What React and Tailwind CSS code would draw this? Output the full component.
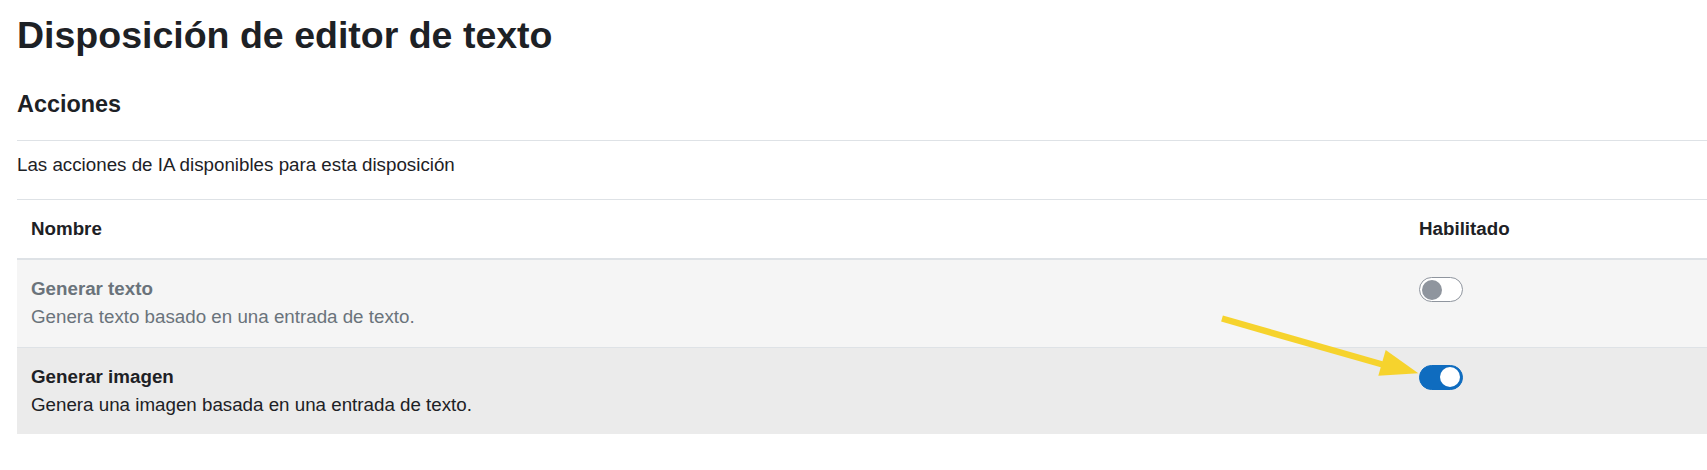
import React from 'react';

const actions = [
  {
    name: 'Generar texto',
    description: 'Genera texto basado en una entrada de texto.',
    enabled: false,
  },
  {
    name: 'Generar imagen',
    description: 'Genera una imagen basada en una entrada de texto.',
    enabled: true,
  },
];

function Toggle({ on }) {
  return (
    <div
      className={`mt-[2px] flex h-[25px] w-[44px] items-center rounded-full border px-[2px] ${
        on ? 'justify-end border-[#0f6cbf] bg-[#0f6cbf]' : 'justify-start border-[#8f959e] bg-white'
      }`}
    >
      <span className={`block h-[20px] w-[20px] rounded-full ${on ? 'bg-white' : 'bg-[#8f959e]'}`} />
    </div>
  );
}

export default function App() {
  return (
    <div className="relative min-h-[470px] overflow-hidden bg-white font-['Liberation_Sans',Arial,sans-serif] text-[#1d2125]">
      <div className="pl-[17px] pt-[13px]">
        <h1 className="text-[37.5px] font-bold leading-[45px]">Disposición de editor de texto</h1>

        <h2 className="mt-[32px] text-[23.4px] font-bold leading-[28px]">Acciones</h2>

        <div className="mt-[22px] border-t border-[#dee2e6] pt-[10px] text-[18.75px] leading-[28.125px]">
          Las acciones de IA disponibles para esta disposición
        </div>

        <table className="mt-[20px] w-full border-collapse text-left text-[18.75px] leading-[28.125px]">
          <thead>
            <tr>
              <th className="w-[1387px] border-t border-b-2 border-[#dee2e6] px-[14px] py-[15px] font-bold">Nombre</th>
              <th className="border-t border-b-2 border-[#dee2e6] px-[15px] py-[15px] font-bold">Habilitado</th>
            </tr>
          </thead>
          <tbody>
            {actions.map((a, i) => (
              <tr
                key={a.name}
                className={`${i > 0 ? 'border-t border-[#dee2e6]' : ''} ${
                  a.enabled ? 'bg-[#ebebeb] text-[#1d2125]' : 'bg-[#f5f5f5] text-[#6a737b]'
                }`}
              >
                <td className="px-[14px] py-[15px] align-top">
                  <div className="font-bold">{a.name}</div>
                  <div>{a.description}</div>
                </td>
                <td className="px-[15px] py-[15px] align-top">
                  <Toggle on={a.enabled} />
                </td>
              </tr>
            ))}
          </tbody>
        </table>
      </div>

      {/* annotation arrow */}
      <svg className="pointer-events-none absolute left-0 top-0" width="1707" height="470" viewBox="0 0 1707 470">
        <line x1="1222" y1="318.5" x2="1386" y2="365.5" stroke="#f6d32d" strokeWidth="6.5" />
        <polygon points="1385.7,350 1418.3,373.3 1378.3,375.7" fill="#f6d32d" />
      </svg>
    </div>
  );
}
